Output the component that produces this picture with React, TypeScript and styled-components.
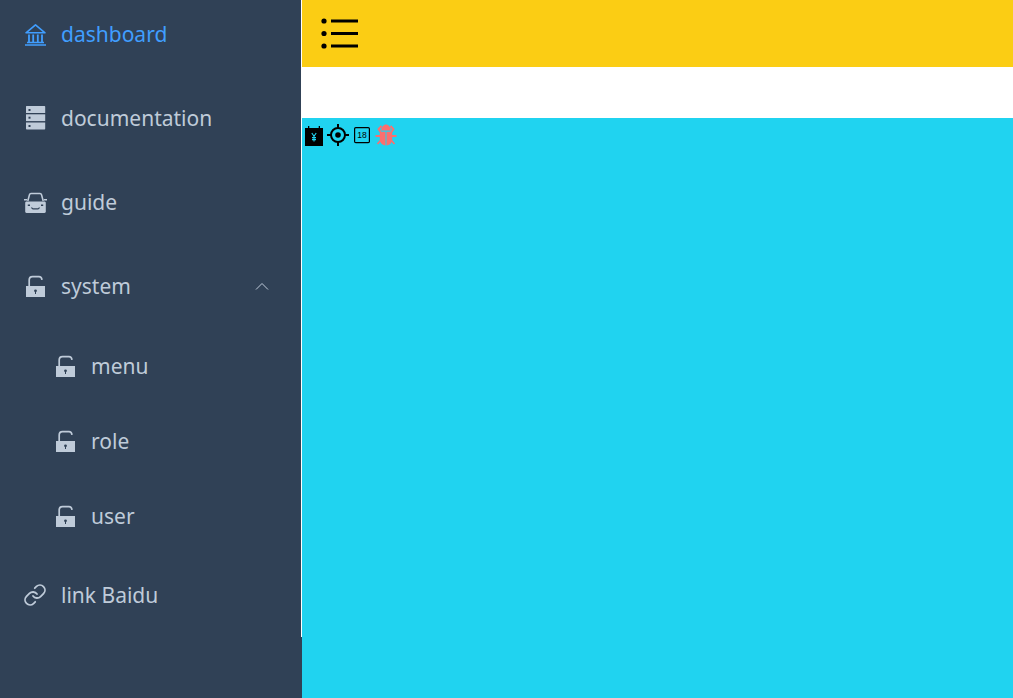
import React from "react";
import styled, { createGlobalStyle } from "styled-components";
import { Link as LinkIcon } from "lucide-react";

const GlobalStyle = createGlobalStyle`
  html, body {
    margin: 0;
    padding: 0;
    height: 100%;
    overflow: hidden;
    font-family: "Noto Sans", "Noto Sans CJK SC", sans-serif;
  }
`;

const Layout = styled.div`
  display: flex;
  height: 698px;
`;

const Sidebar = styled.aside`
  width: 302px;
  flex-shrink: 0;
  background: #304156;
`;

const Menu = styled.nav`
  display: flex;
  flex-direction: column;
  gap: 16px;
  padding-bottom: 8px;
  border-right: 1px solid #ffffff;
`;

const Item = styled.div<{ $active?: boolean; $sub?: boolean }>`
  display: flex;
  align-items: center;
  height: ${(p) => (p.$sub ? "59px" : "68px")};
  padding: 0 ${(p) => (p.$sub ? "0" : "32px")} 0 ${(p) => (p.$sub ? "53px" : "23px")};
  color: ${(p) => (p.$active ? "#409eff" : "#bfcbd9")};
  font-size: 21px;
  white-space: nowrap;
`;

const ItemIcon = styled.span`
  display: flex;
  width: 24px;
  height: 24px;
  margin-right: 14px;
  flex-shrink: 0;
`;

const Arrow = styled.svg`
  margin-left: auto;
  width: 14px;
  height: 8px;
`;

const SubMenu = styled.div`
  display: flex;
  flex-direction: column;
  gap: 16px;
`;

const Main = styled.main`
  flex: 1;
  display: flex;
  flex-direction: column;
  min-width: 0;
`;

const Header = styled.header`
  height: 67px;
  flex-shrink: 0;
  display: flex;
  align-items: center;
  padding-left: 18px;
  background: #fbcd14;
`;

const TagsBar = styled.div`
  height: 51px;
  flex-shrink: 0;
  background: #ffffff;
`;

const Content = styled.section`
  flex: 1;
  display: flex;
  align-items: flex-start;
  padding-top: 5px;
  background: #20d3f0;
`;

const SmallIcon = styled.svg`
  width: 24px;
  height: 24px;
  flex-shrink: 0;
`;

function BankIcon() {
  return (
    <svg width="24" height="24" viewBox="0 0 24 24" fill="none" stroke="currentColor" strokeWidth="1.6">
      <path d="M3 10.800 12.500 2.800 22 10.800H3Z" strokeLinejoin="round" />
      <path d="M6 12.500v7.500M10.200 12.500v7.500M14.800 12.500v7.500M19 12.500v7.500" strokeWidth="1.800" />
      <path d="M4 20.500h17M2 23h21" />
    </svg>
  );
}

function ServerIcon() {
  return (
    <svg width="24" height="24" viewBox="0 0 24 24" fill="currentColor">
      <path d="M3.500 0h18a.7.7 0 0 1 .7.7V7H3V.7a.7.7 0 0 1 .5-.7Z" />
      <rect x="3" y="8.300" width="19.200" height="6.800" />
      <path d="M3 16.500h19.200v6.200a.7.7 0 0 1-.7.7H3.700a.7.7 0 0 1-.7-.7Z" />
      <g fill="#304156">
        <rect x="5.500" y="3" width="2" height="2" />
        <rect x="5.500" y="10.700" width="2" height="2" />
        <rect x="5.500" y="19" width="2" height="2" />
      </g>
    </svg>
  );
}

function CarIcon() {
  return (
    <svg width="24" height="24" viewBox="0 0 24 24" fill="none">
      <path d="M4.800 11 6.500 4.600c.2-.8.8-1.100 1.500-1.100h9c.7 0 1.300.3 1.500 1.100L20.200 11" stroke="currentColor" strokeWidth="1.600" />
      <path d="M1 9h3.200v1.500H1ZM20.800 9H24v1.500h-3.200Z" fill="currentColor" />
      <path d="M3.500 11.500h18c.7 0 1.300.6 1.300 1.300v9c0 .7-.6 1.200-1.300 1.200h-18c-.7 0-1.300-.5-1.300-1.200v-9c0-.7.6-1.300 1.300-1.300Z" fill="currentColor" />
      <path d="M8.500 17.500c.6 1 1 1.300 1.500 1.300h5c.5 0 .9-.3 1.500-1.300" stroke="#304156" strokeWidth="1.200" />
      <path d="M4.800 14.500h2.200v1.600H4.800ZM18 14.500h2.200v1.600H18Z" fill="#304156" />
    </svg>
  );
}

function LockOpenIcon() {
  return (
    <svg width="24" height="24" viewBox="0 0 24 24" fill="none">
      <path d="M6.200 12V6C6.200 3.500 7.700 2.600 9.500 2.600h6.500c1.800 0 2.700 1 3 3.200" stroke="currentColor" strokeWidth="1.700" />
      <path d="M3 12h19v11H3Z" fill="currentColor" />
      <circle cx="12.500" cy="16.800" r="1.400" fill="#304156" />
      <rect x="12" y="17" width="1" height="3" fill="#304156" />
    </svg>
  );
}

function ListIcon() {
  return (
    <svg width="40" height="40" viewBox="0 0 40 40" fill="none" stroke="#000000" strokeWidth="3">
      <path d="M11 7h27M11 19.500h27M11 32h27" />
      <g fill="#000000" stroke="none">
        <circle cx="4" cy="7" r="2.600" />
        <circle cx="4" cy="19.500" r="2.600" />
        <circle cx="4" cy="32" r="2.600" />
      </g>
    </svg>
  );
}

function MoneyCalendarIcon() {
  return (
    <SmallIcon viewBox="0 0 24 24">
      <path d="M3 5h3V3h1.300v2h9.400V3H18v2h3v18H3Z" fill="#000000" />
      <path d="M9.800 10 12 13.200 14.200 10M12 13.200v5.300M10 14.600h4M10 16.600h4" fill="none" stroke="#20d3f0" strokeWidth="1.100" />
    </SmallIcon>
  );
}

function TargetIcon() {
  return (
    <SmallIcon viewBox="0 0 24 24" fill="none" stroke="#000000" strokeWidth="2">
      <circle cx="12" cy="12" r="7" />
      <path d="M12 1v4M12 19v4M1 12h4M19 12h4" />
      <circle cx="12" cy="12" r="2.800" fill="#000000" stroke="none" />
    </SmallIcon>
  );
}

function AgeBoxIcon() {
  return (
    <SmallIcon viewBox="0 0 24 24">
      <rect x="4.600" y="4.600" width="14.800" height="15" rx="1.200" fill="none" stroke="#000000" strokeWidth="1.200" />
      <text x="12" y="15.200" fontSize="8.500" textAnchor="middle" fontFamily="Liberation Sans, sans-serif" fill="#000000">18</text>
    </SmallIcon>
  );
}

function BugIcon() {
  return (
    <SmallIcon viewBox="0 0 24 24" fill="#fb6f6f">
      <path d="M7 7.500C7.500 4 9.500 1.500 12 1.500s4.500 2.500 5 6Z" />
      <path d="M5.800 8.800h5.700v13.700C8 22.200 5.800 19.500 5.800 16ZM12.500 8.800h5.700V16c0 3.500-2.200 6.200-5.700 6.500Z" />
      <path d="M7.500 3 4.500 6l2 3M16.500 3l3 3-2 3M1.500 13h5M17.500 13h5M7 17l-3.500 4M17 17l3.500 4" fill="none" stroke="#fb6f6f" strokeWidth="1.800" />
    </SmallIcon>
  );
}

const subItems = ["menu", "role", "user"];

export default function App() {
  return (
    <>
      <GlobalStyle />
      <Layout>
        <Sidebar>
          <Menu>
            <Item $active>
              <ItemIcon><BankIcon /></ItemIcon>
              dashboard
            </Item>
            <Item>
              <ItemIcon><ServerIcon /></ItemIcon>
              documentation
            </Item>
            <Item>
              <ItemIcon><CarIcon /></ItemIcon>
              guide
            </Item>
            <Item>
              <ItemIcon><LockOpenIcon /></ItemIcon>
              system
              <Arrow viewBox="0 0 14 8" fill="none" stroke="currentColor" strokeWidth="1">
                <path d="M1 7.500 7 1.500l6 6" />
              </Arrow>
            </Item>
            <SubMenu>
              {subItems.map((name) => (
                <Item $sub key={name}>
                  <ItemIcon><LockOpenIcon /></ItemIcon>
                  {name}
                </Item>
              ))}
            </SubMenu>
            <Item>
              <ItemIcon><LinkIcon size={24} strokeWidth={1.8} /></ItemIcon>
              link Baidu
            </Item>
          </Menu>
        </Sidebar>
        <Main>
          <Header><ListIcon /></Header>
          <TagsBar />
          <Content>
            <MoneyCalendarIcon />
            <TargetIcon />
            <AgeBoxIcon />
            <BugIcon />
          </Content>
        </Main>
      </Layout>
    </>
  );
}
